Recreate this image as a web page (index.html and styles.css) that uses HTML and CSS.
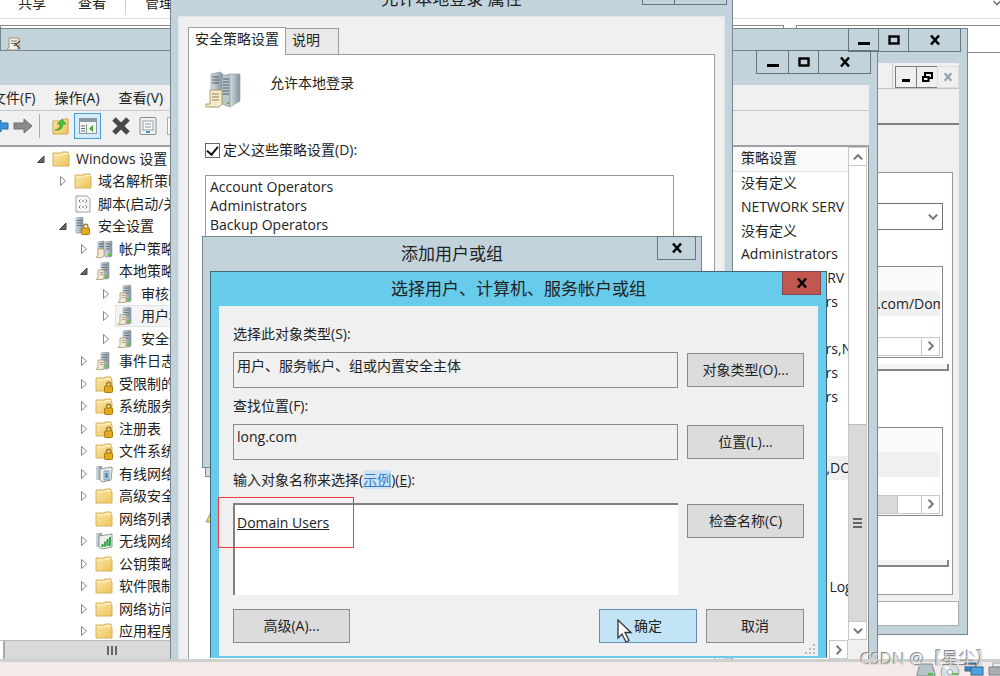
FILE: index.html
```
<!DOCTYPE html>
<html lang="zh-CN">
<head>
  <meta charset="UTF-8">
  <meta name="viewport" content="width=device-width, initial-scale=1.0">
  <title>选择用户、计算机、服务帐户或组</title>
  <link rel="stylesheet" href="styles.css">
</head>
<body>

  <!-- shared icons -->
  <svg class="sprite" aria-hidden="true">
    <defs>
      <linearGradient id="gold" x1="0" y1="0" x2="1" y2="1"><stop offset="0" stop-color="#fbe7a4"/><stop offset="1" stop-color="#eec45d"/></linearGradient>
      <linearGradient id="steel" x1="0" y1="0" x2="1" y2="0"><stop offset="0" stop-color="#d3dde3"/><stop offset="1" stop-color="#84929c"/></linearGradient>
    </defs>
    <symbol id="i-folder" viewBox="0 0 18 18">
      <path d="M1 3h8l1-1h6v2l1 1v11H1z" fill="url(#gold)" stroke="#d6b05c"/>
      <path d="M11 3.500h4" stroke="#fff"/>
      <path d="M2 5h8l1-1h5" stroke="#fff3c9" fill="none"/>
    </symbol>
    <symbol id="i-lock" viewBox="0 0 18 18">
      <path d="M11.500 12V9.500a2.200 2.200 0 0 1 4.400 0V12" fill="none" stroke="#a08038" stroke-width="1.400"/>
      <rect x="9.500" y="11" width="8" height="6.500" rx="1" fill="#e5a91c" stroke="#a97a10"/>
    </symbol>
    <symbol id="i-tower" viewBox="0 0 18 18">
      <path d="M6 1l7-1 1 1v15l-2 1H6z" fill="url(#steel)" stroke="#8695a0" stroke-width=".6"/>
      <path d="M7 3h5M7 5.500h5M7 8h5" stroke="#5f7382"/>
      <rect x="10" y="13" width="3" height="3" fill="#69c33a"/>
    </symbol>
    <symbol id="i-server" viewBox="0 0 18 18">
      <use href="#i-tower"/>
      <path d="M3 8h6v8l-1 1.500H1L3 15z" fill="#f3ead0" stroke="#a89a78" stroke-width=".8"/>
      <path d="M5 10.500h3M5 12.500h3" stroke="#9a8e70" stroke-width=".8"/>
    </symbol>
    <symbol id="i-servers" viewBox="0 0 18 18">
      <path d="M3 2l6-1v15H3z" fill="url(#steel)" stroke="#8695a0" stroke-width=".6"/>
      <path d="M10 2l7-1v15l-2 1h-5z" fill="url(#steel)" stroke="#8695a0" stroke-width=".6"/>
      <path d="M4 4h4M4 6.500h4M11 4h4M11 6.500h4M11 9h4" stroke="#5f7382"/>
      <path d="M3 9h6v7l-2 1.500H1L3 15z" fill="#f3ead0" stroke="#a89a78" stroke-width=".8"/>
      <rect x="13" y="14" width="3" height="2" fill="#69c33a"/>
    </symbol>
    <symbol id="i-secure" viewBox="0 0 18 18">
      <path d="M2 1l7-1v16H2z" fill="url(#steel)" stroke="#8695a0" stroke-width=".6"/>
      <path d="M3 3.500h5M3 6h5M3 8.500h5" stroke="#5f7382"/>
      <use href="#i-lock" x="-2"/>
    </symbol>
    <symbol id="i-script" viewBox="0 0 18 18">
      <path d="M2 1h11l3 3v13H2z" fill="#f8f8f8" stroke="#a0a0a0"/>
      <path d="M6.500 4.500L5 6l1.500 1.500M11.500 4.500L13 6l-1.500 1.500M6.500 10.500L5 12l1.500 1.500M11.500 10.500L13 12l-1.500 1.500M8 6h2M8 12h2" fill="none" stroke="#777"/>
    </symbol>
    <symbol id="i-wired" viewBox="0 0 18 18">
      <path d="M1 1h6v14H1z" fill="url(#steel)"/>
      <path d="M5 4l12-2v3l-1 10-9 2-2-2z" fill="#eef1ea" stroke="#8f9a90"/>
      <rect x="9" y="6" width="5" height="9" fill="#b9d7ea" stroke="#5d90b5" stroke-width=".8"/>
      <path d="M11.500 8v5" stroke="#3e7299" stroke-width="2"/>
    </symbol>
    <symbol id="i-wireless" viewBox="0 0 18 18">
      <path d="M1 1h6v14H1z" fill="url(#steel)"/>
      <path d="M4 4l13-2v13l-10 2-3-2z" fill="#eef1ea" stroke="#8f9a90"/>
      <path d="M5 15L16 4v10z" fill="#a9dcb4"/>
      <path d="M7.500 15v-3M10 14.500V9.500M12.500 14V7M15 14V5" stroke="#2d9a4a" stroke-width="1.800"/>
    </symbol>
    <symbol id="i-min" viewBox="0 0 12 12"><path d="M0 9.500h12" stroke="#000" stroke-width="3"/></symbol>
    <symbol id="i-max" viewBox="0 0 12 12"><rect x="1.500" y="2.500" width="9" height="7" fill="none" stroke="#000" stroke-width="2.400"/></symbol>
    <symbol id="i-restore" viewBox="0 0 12 12"><path d="M4 5V2h7v5H8" fill="none" stroke="#000" stroke-width="2"/><rect x="2" y="6" width="5.500" height="4" fill="none" stroke="#000" stroke-width="2"/></symbol>
    <symbol id="i-close" viewBox="0 0 12 12"><path d="M2 1.500l8 9M10 1.500l-8 9" stroke="currentColor" stroke-width="2.600"/></symbol>
    <symbol id="i-up" viewBox="0 0 10 10"><path d="M1.500 7L5 3.500 8.500 7" fill="none" stroke="#777" stroke-width="1.600"/></symbol>
    <symbol id="i-down" viewBox="0 0 10 10"><path d="M1.500 3L5 6.500 8.500 3" fill="none" stroke="#777" stroke-width="1.600"/></symbol>
    <symbol id="i-right" viewBox="0 0 10 10"><path d="M3 1.500L6.500 5 3 8.500" fill="none" stroke="#777" stroke-width="1.600"/></symbol>
    <symbol id="i-shut" viewBox="0 0 10 12"><path d="M2.500 1.500v9l5-4.500z" fill="#fff" stroke="#888"/></symbol>
    <symbol id="i-open" viewBox="0 0 10 12"><path d="M8 3v6.500H1.500z" fill="#666" stroke="#444"/></symbol>
  </svg>

  <main class="desktop">

    <!-- file explorer -->
    <section class="window explorer">
      <nav class="ribbon">
        <button>共享</button>
        <button>查看</button>
        <i class="ribbon-sep"></i>
        <button>管理</button>
        <svg class="ribbon-toggle" width="10" height="10"><use href="#i-down"/></svg>
      </nav>
      <div class="address-row">
        <div class="address"></div>
        <div class="search"></div>
      </div>
    </section>

    <!-- group policy management console -->
    <section class="window frame console">
      <header class="titlebar">
        <svg class="title-icon" width="16" height="14" viewBox="0 0 16 14"><path d="M3 1h10v9l-2 3H1l2-3z" fill="#f7f1df" stroke="#9c937c"/><path d="M5 4h6M5 6.500h6" stroke="#777"/><path d="M8 9l6-5M9 6l5 6" stroke="#555" stroke-width="1.500"/></svg>
        <div class="controls">
          <button class="w31" aria-label="最小化"><svg width="12" height="12"><use href="#i-min"/></svg></button>
          <button class="w31" aria-label="最大化"><svg width="12" height="12"><use href="#i-max"/></svg></button>
          <button class="w52" aria-label="关闭"><svg width="12" height="12"><use href="#i-close"/></svg></button>
        </div>
      </header>
      <div class="mdi-bar">
        <div class="mdi-menu"></div>
        <button aria-label="最小化"><svg width="8" height="12" viewBox="0 0 8 12"><path d="M0 9.500h8" stroke="#000" stroke-width="3"/></svg></button>
        <button aria-label="还原"><svg width="12" height="12"><use href="#i-restore"/></svg></button>
        <button class="mdi-off" aria-label="关闭"><svg width="10" height="10" viewBox="0 0 12 12"><use href="#i-close"/></svg></button>
      </div>
      <div class="console-tools"></div>
      <div class="scope">
        <div class="combo">
          <select aria-label="显示链接"><option>long.com</option></select>
          <svg width="12" height="12" viewBox="0 0 10 10"><use href="#i-down"/></svg>
        </div>
        <div class="links">
          <div class="links-head"></div>
          <div class="links-row"><span>long.com/Domain Controllers</span></div>
          <div class="hbar">
            <i class="hthumb none"></i>
            <button aria-label="向右"><svg width="12" height="12"><use href="#i-right"/></svg></button>
          </div>
        </div>
        <div class="groove"></div>
        <div class="links filters">
          <div class="links-head"></div>
          <div class="links-row"></div>
          <div class="hbar">
            <i class="hthumb"></i>
            <button aria-label="向右"><svg width="12" height="12"><use href="#i-right"/></svg></button>
          </div>
        </div>
        <div class="groove"></div>
      </div>
      <div class="console-status"></div>
    </section>

    <!-- policy editor -->
    <section class="window frame editor">
      <header class="titlebar">
        <div class="controls">
          <button class="w32" aria-label="最小化"><svg width="12" height="12"><use href="#i-min"/></svg></button>
          <button class="w31" aria-label="最大化"><svg width="12" height="12"><use href="#i-max"/></svg></button>
          <button class="w52" aria-label="关闭"><svg width="12" height="12"><use href="#i-close"/></svg></button>
        </div>
      </header>
      <nav class="menubar">
        <button>文件(F)</button>
        <button>操作(A)</button>
        <button>查看(V)</button>
      </nav>
      <div class="toolbar">
        <button aria-label="后退"><svg width="20" height="20" viewBox="0 0 20 20"><path d="M1 10l8-6v3h7v6H9v3z" fill="#3b8fdc" stroke="#2b6ca8"/></svg></button>
        <button aria-label="前进"><svg width="20" height="20" viewBox="0 0 20 20"><path d="M19 10l-8-7v4H1v6h10v4z" fill="#8b8b8b" stroke="#6f6f6f"/></svg></button>
        <i class="tool-sep"></i>
        <button aria-label="向上"><svg width="20" height="20" viewBox="0 0 20 20"><path d="M2 5h9l1-2h5v15H2z" fill="url(#gold)" stroke="#cfa64d"/><path d="M4 14c4-1 5-3 5-6H6l5-5 4 5h-3c0 4-3 7-8 6z" fill="#4fbf35" stroke="#2f8f20" stroke-width=".6"/></svg></button>
        <button class="tool-on" aria-label="显示控制台树"><svg width="20" height="20" viewBox="0 0 20 20"><rect x="1.500" y="2.500" width="17" height="15" fill="#f4f6f8" stroke="#8b98a5"/><path d="M2 4.500h16" stroke="#8b98a5" stroke-width="3"/><path d="M8.500 8v9" stroke="#8b98a5"/><path d="M3 10h4M3 12.500h4M3 15h4" stroke="#666"/><path d="M15 9v7l-4-3.500z" fill="#44b02c"/></svg></button>
        <button aria-label="删除"><svg width="20" height="20" viewBox="0 0 20 20"><path d="M3 3l14 14M17 3L3 17" stroke="#484848" stroke-width="5"/></svg></button>
        <button aria-label="属性"><svg width="20" height="20" viewBox="0 0 20 20"><rect x="2" y="1.500" width="16" height="17" rx="1" fill="#f2f2f2" stroke="#8a8a8a"/><rect x="5" y="5" width="10" height="9" fill="#fff" stroke="#8c9aa8"/><path d="M7 8h6M7 11h6" stroke="#7c93aa"/><path d="M8 16h4" stroke="#3c9ad6" stroke-width="2"/></svg></button>
        <button aria-label="导出列表"><svg width="20" height="20" viewBox="0 0 20 20"><rect x="2.500" y="1.500" width="15" height="17" fill="#fdfaf0" stroke="#aaa"/><path d="M5 6h2M5 10h2M5 14h2M9 6h6M9 10h6M9 14h6" stroke="#777" stroke-width="1.500"/></svg></button>
      </div>
      <div class="panes">
        <div class="tree-pane">
          <ul class="tree">
            <li class="l1"><svg class="tw"><use href="#i-open"/></svg><svg><use href="#i-folder"/></svg>Windows 设置</li>
            <li class="l2"><svg class="tw"><use href="#i-shut"/></svg><svg><use href="#i-folder"/></svg>域名解析策略</li>
            <li class="l2"><svg class="tw"></svg><svg><use href="#i-script"/></svg>脚本(启动/关机)</li>
            <li class="l2"><svg class="tw"><use href="#i-open"/></svg><svg><use href="#i-secure"/></svg>安全设置</li>
            <li class="l3"><svg class="tw"><use href="#i-shut"/></svg><svg><use href="#i-servers"/></svg>帐户策略</li>
            <li class="l3"><svg class="tw"><use href="#i-open"/></svg><svg><use href="#i-server"/></svg>本地策略</li>
            <li class="l4"><svg class="tw"><use href="#i-shut"/></svg><svg><use href="#i-server"/></svg>审核策略</li>
            <li class="l4"><svg class="tw"><use href="#i-shut"/></svg><span class="picked"><svg><use href="#i-server"/></svg>用户权限分配</span></li>
            <li class="l4"><svg class="tw"><use href="#i-shut"/></svg><svg><use href="#i-server"/></svg>安全选项</li>
            <li class="l3"><svg class="tw"><use href="#i-shut"/></svg><svg><use href="#i-server"/></svg>事件日志</li>
            <li class="l3"><svg class="tw"><use href="#i-shut"/></svg><svg><use href="#i-folder"/><use href="#i-lock"/></svg>受限制的组</li>
            <li class="l3"><svg class="tw"><use href="#i-shut"/></svg><svg><use href="#i-folder"/><use href="#i-lock"/></svg>系统服务</li>
            <li class="l3"><svg class="tw"><use href="#i-shut"/></svg><svg><use href="#i-folder"/><use href="#i-lock"/></svg>注册表</li>
            <li class="l3"><svg class="tw"><use href="#i-shut"/></svg><svg><use href="#i-folder"/><use href="#i-lock"/></svg>文件系统</li>
            <li class="l3"><svg class="tw"><use href="#i-shut"/></svg><svg><use href="#i-wired"/></svg>有线网络</li>
            <li class="l3"><svg class="tw"><use href="#i-shut"/></svg><svg><use href="#i-folder"/></svg>高级安全</li>
            <li class="l3"><svg class="tw"></svg><svg><use href="#i-folder"/></svg>网络列表</li>
            <li class="l3"><svg class="tw"><use href="#i-shut"/></svg><svg><use href="#i-wireless"/></svg>无线网络</li>
            <li class="l3"><svg class="tw"><use href="#i-shut"/></svg><svg><use href="#i-folder"/></svg>公钥策略</li>
            <li class="l3"><svg class="tw"><use href="#i-shut"/></svg><svg><use href="#i-folder"/></svg>软件限制</li>
            <li class="l3"><svg class="tw"><use href="#i-shut"/></svg><svg><use href="#i-folder"/></svg>网络访问</li>
            <li class="l3"><svg class="tw"><use href="#i-shut"/></svg><svg><use href="#i-folder"/></svg>应用程序</li>
          </ul>
          <div class="tree-scroll"><div class="tree-thumb"><i class="grip upright"></i></div></div>
        </div>
        <div class="list-pane">
          <div class="list-clip">
            <table class="policies">
              <thead><tr><th>策略设置</th></tr></thead>
              <tbody>
                <tr><td>没有定义</td></tr>
                <tr><td>NETWORK SERV</td></tr>
                <tr><td>没有定义</td></tr>
                <tr><td>Administrators</td></tr>
                <tr><td>NETWORK SERV</td></tr>
                <tr><td>Administrators</td></tr>
                <tr><td></td></tr>
                <tr><td>Administrators,NT SERVICE</td></tr>
                <tr><td>Administrators</td></tr>
                <tr><td>Administrators</td></tr>
                <tr><td></td></tr>
                <tr><td></td></tr>
                <tr class="current"><td>LONG\admin,DOMAIN</td></tr>
                <tr><td></td></tr>
                <tr><td></td></tr>
                <tr><td></td></tr>
                <tr><td></td></tr>
                <tr><td>Performance Log Users</td></tr>
              </tbody>
            </table>
          </div>
          <div class="vbar">
            <button aria-label="向上"><svg width="12" height="12"><use href="#i-up"/></svg></button>
            <div class="vtrack"></div>
            <div class="vthumb"><i class="grip"></i></div>
            <button aria-label="向下"><svg width="12" height="12"><use href="#i-down"/></svg></button>
          </div>
          <div class="list-foot"><button aria-label="向右"><svg width="12" height="12"><use href="#i-right"/></svg></button></div>
        </div>
      </div>
    </section>

    <!-- policy properties -->
    <section class="window frame props">
      <header class="titlebar">
        <h2>允许本地登录 属性</h2>
        <div class="controls">
          <button class="w32" aria-label="帮助"></button>
          <button class="w52" aria-label="关闭"></button>
        </div>
      </header>
      <div class="props-body">
        <div class="tabs" role="tablist">
          <button class="tab active" role="tab">安全策略设置</button>
          <button class="tab" role="tab">说明</button>
        </div>
        <div class="tab-page">
          <div class="policy-name">
            <svg width="38" height="38" viewBox="0 0 38 38">
              <path d="M6 3l9-2 3 2v27l-9 2-3-2z" fill="url(#steel)" stroke="#9aa6ae" stroke-width=".7"/>
              <path d="M17 5l8-2v33l-8-3z" fill="#b9c6ce" stroke="#87949d" stroke-width=".7"/>
              <path d="M25 3h10v27l-10 6z" fill="url(#steel)" stroke="#9aa6ae" stroke-width=".7"/>
              <path d="M7 6h7M7 9h7M7 12h7M18 8h6M18 11h6M18 14h6M18 17h6M18 20h6M18 23h6" stroke="#4c5d69"/>
              <rect x="22" y="31" width="3" height="2" fill="#69c33a"/>
              <path d="M5 19h12v14l-3 3H1v-3h4z" fill="#f6ebc9" stroke="#b09b6a"/>
              <path d="M7 23h7M7 26h7M7 29h7" stroke="#8e8058"/>
            </svg>
            <span>允许本地登录</span>
          </div>
          <label class="define"><input type="checkbox" checked>定义这些策略设置(D):</label>
          <ul class="members">
            <li>Account Operators</li>
            <li>Administrators</li>
            <li>Backup Operators</li>
          </ul>
          <button class="btn" aria-label="添加用户或组"></button>
          <svg class="warn" width="18" height="18" viewBox="0 0 18 18"><path d="M9 1l8 16H1z" fill="#f5d63b" stroke="#9c9c80"/><path d="M9 6v6M9 13.500v1.500" stroke="#333" stroke-width="1.500"/></svg>
        </div>
      </div>
    </section>

    <!-- add user or group -->
    <section class="window frame adduser">
      <header class="titlebar">
        <h2>添加用户或组</h2>
        <div class="controls"><button class="w38" aria-label="关闭"><svg width="12" height="12"><use href="#i-close"/></svg></button></div>
      </header>
    </section>

    <!-- object picker -->
    <section class="window frame picker">
      <header class="titlebar">
        <h2>选择用户、计算机、服务帐户或组</h2>
        <div class="controls"><button class="w38 danger" aria-label="关闭"><svg width="12" height="12"><use href="#i-close"/></svg></button></div>
      </header>
      <form class="picker-body">
        <div class="fields">
          <label for="objType">选择此对象类型(S):</label>
          <input id="objType" type="text" value="用户、服务帐户、组或内置安全主体" readonly>
          <button type="button" class="btn">对象类型(O)...</button>
          <label for="location">查找位置(F):</label>
          <input id="location" type="text" value="long.com" readonly>
          <button type="button" class="btn">位置(L)...</button>
          <div class="names-label"><label for="names">输入对象名称来选择</label>(<a href="#">示例</a>)(<u>E</u>):</div>
          <textarea id="names" spellcheck="false">Domain Users</textarea>
          <button type="button" class="btn">检查名称(C)</button>
        </div>
        <div class="actions">
          <button type="button" class="btn advanced">高级(A)...</button>
          <button type="button" class="btn ok">确定</button>
          <button type="button" class="btn cancel">取消</button>
        </div>
        <svg class="sizer" width="10" height="10" viewBox="0 0 10 10"><path d="M8 0h2v2H8zM4 4h2v2H4zM8 4h2v2H8zM0 8h2v2H0zM4 8h2v2H4zM8 8h2v2H8z" fill="#bbb"/></svg>
      </form>
    </section>

    <div class="marker"></div>
    <svg class="pointer" width="16" height="24" viewBox="0 0 16 24"><path d="M1 1v18l4-4 4 8 3-1.500-4-8h6z" fill="#fff" stroke="#333" stroke-width="1.300"/></svg>
  </main>

  <footer class="taskbar">
    <svg width="20" height="14" viewBox="0 0 20 14"><path d="M4 2h12l3 10v2H1v-2z" fill="#b9c3ca" stroke="#7f8c94"/><path d="M12 12h5" stroke="#4fbf35" stroke-width="2"/></svg>
    <svg width="20" height="14" viewBox="0 0 20 14"><circle cx="10" cy="10" r="9" fill="#d5dde2" stroke="#9aa6ad"/><path d="M10 10L3 5a9 9 0 0 1 5-4z" fill="#f7fafb"/><circle cx="10" cy="10" r="2.500" fill="#fff" stroke="#9aa6ad"/><path d="M12 12h6" stroke="#6fbf55" stroke-width="2"/></svg>
    <svg width="20" height="14" viewBox="0 0 20 14"><rect x="1" y="1" width="11" height="8" fill="#3384c4" stroke="#47626f"/><rect x="7" y="5" width="12" height="8" fill="#4aa3e4" stroke="#47626f"/></svg>
    <svg width="20" height="14" viewBox="0 0 20 14"><path d="M5 1h12v4H5z" fill="#eee" stroke="#999"/><path d="M1 5h19v8H1z" fill="#a9adb0" stroke="#808588"/></svg>
    <span class="watermark">CSDN @【星尘】</span>
  </footer>

</body>
</html>
```

FILE: styles.css
```
* {
  box-sizing: border-box;
}

body {
  margin: 0;
  height: 100vh;
  display: grid;
  grid-template-rows: 1fr 17px;
  overflow: hidden;
  font-family: "Open Sans", "Noto Sans", "Noto Sans CJK SC", sans-serif;
  font-size: 14px;
  line-height: 20px;
  color: #222;
  background: #f3eae9;
}

button, input, select, textarea {
  font: inherit;
  color: inherit;
  margin: 0;
  padding: 0;
  border-radius: 0;
}

button {
  border: none;
  background: none;
  white-space: nowrap;
}

ul {
  list-style: none;
  margin: 0;
  padding: 0;
}

h2 {
  margin: 0;
  font-size: 17px;
  font-weight: normal;
}

.sprite {
  position: absolute;
  width: 0;
  height: 0;
}

.desktop {
  position: relative;
  overflow: hidden;
  background: #fff;
}

/* windows */
.window {
  position: absolute;
  display: flex;
  flex-direction: column;
}

.frame {
  background: #c2d3dc;
  border: 1px solid #77858e;
  padding: 0 8px 8px;
}

.titlebar {
  position: relative;
  flex: none;
  height: 34px;
  display: flex;
  align-items: center;
  justify-content: center;
}

.controls {
  position: absolute;
  top: -1px;
  right: -2px;
  display: flex;
}

.controls button {
  height: 24px;
  display: flex;
  align-items: center;
  justify-content: center;
  border: 1px solid #65747e;
  margin-left: -1px;
  color: #000;
}

.w31 { width: 31px; }
.w32 { width: 33px; }
.w38 { width: 39px; }
.w52 { width: 53px; }

/* explorer */
.explorer {
  top: -12px;
  left: 0;
  right: 0;
  bottom: 0;
  background: #fff;
}

.ribbon {
  display: flex;
  align-items: center;
  gap: 32px;
  height: 31px;
  padding-left: 18px;
  border-bottom: 1px solid #ddd;
}

.ribbon-sep {
  width: 1px;
  height: 24px;
  margin: 0 -13px;
  background: #ccc;
}

.ribbon-toggle {
  margin-left: auto;
  margin-right: -2px;
}

.address-row {
  display: flex;
  gap: 12px;
  margin-top: 6px;
}

.address, .search {
  height: 28px;
  border: 1px solid #888;
}

.address {
  flex: 790;
}

.search {
  flex: 205;
  margin-right: -1px;
}

/* management console */
.console {
  top: 28px;
  left: 0;
  width: 968px;
  height: 607px;
}

.title-icon {
  position: absolute;
  left: -3px;
  top: 8px;
}

.console .titlebar {
  z-index: 1;
}

.mdi-bar {
  display: flex;
  height: 26px;
  padding-right: 1px;
  background: #f0f0f0;
  border-bottom: 1px solid #c4c4c8;
}

.mdi-menu {
  flex: 1;
  margin-right: 2px;
  border-right: 1px solid #ccc;
}

.mdi-bar button {
  width: 22px;
  height: 22px;
  margin-top: 3px;
  margin-right: -1px;
  border: 1px solid #7d7d7d;
  display: flex;
  align-items: center;
  justify-content: center;
}

.mdi-bar .mdi-off {
  border-color: #ddd;
  color: #95a3b0;
}

.console-tools {
  position: relative;
  height: 36px;
  background: #f0f0f0;
  border-bottom: 2px solid #808080;
}

.console .scope {
  background: #fff;
  border: 1px solid #9298a2;
  height: 424px;
  padding: 30px 9px 0;
  box-shadow: 0 0 0 6px #f0f0f0, 0 -42px 0 6px #f0f0f0;
  margin: 47px 6px 0;
}

.combo {
  position: relative;
  height: 27px;
}

.combo select {
  width: 100%;
  height: 100%;
  appearance: none;
  background: #fff;
  border: 1px solid #707070;
}

.combo svg {
  position: absolute;
  right: 4px;
  top: 8px;
}

.links {
  display: flex;
  flex-direction: column;
  height: 92px;
  margin-top: 36px;
  padding: 0 2px 1px;
  border: 1px solid #828790;
}

.links-head {
  height: 24px;
  background: #fafafa;
}

.links-row {
  height: 25px;
  background: #f0f0f0;
  display: flex;
  justify-content: flex-end;
}

.links-row span {
  width: 91px;
  line-height: 25px;
  white-space: nowrap;
  overflow: hidden;
}

.hbar {
  display: flex;
  height: 19px;
  margin-top: auto;
  border: 1px solid #c8c8c8;
}

.hthumb {
  flex: 1;
  margin-right: 23px;
  background: #d9d9d9;
  border-right: 1px solid #bbb;
}

.hthumb.none {
  margin-right: 0;
  background: none;
  border: none;
}

.hbar button {
  width: 18px;
  border-left: 1px solid #c8c8c8;
  display: flex;
  align-items: center;
  justify-content: center;
}

.groove {
  height: 7px;
  margin: 6px -6px 0 0;
  background: #f4f4f4;
  border: solid #868686;
  border-width: 0 2px 2px 0;
}

.filters {
  height: 89px;
  margin-top: 56px;
}

.filters + .groove {
  margin-top: 44px;
}

.console-status {
  height: 25px;
  margin-top: 6px;
  background: #fff;
  border: 1px solid #a8adb2;
}

/* policy editor */
.editor {
  top: 50px;
  left: -18px;
  width: 896px;
  bottom: 0;
  padding-bottom: 0;
  border-bottom: none;
}

.menubar {
  display: flex;
  flex: none;
  gap: 19px;
  height: 26px;
  padding-left: 1px;
  align-items: center;
  background: #f0f0f0;
  border-bottom: 1px solid #c6c6ce;
}

.toolbar {
  display: flex;
  flex: none;
  align-items: center;
  height: 34px;
  padding-bottom: 4px;
  background: #f0f0f0;
}

.toolbar button {
  width: 27px;
  height: 26px;
  display: flex;
  align-items: center;
  justify-content: center;
}

.toolbar button:nth-child(-n+2) {
  width: 21px;
}

.tool-sep {
  width: 1px;
  height: 24px;
  margin: 0 7px 0 6px;
  background: #aaa;
}

.toolbar .tool-on {
  background: #d6ebfa;
  border: 1px solid #4a9bd4;
}

.toolbar .tool-on + button {
  margin-left: 6px;
}

.panes {
  flex: 1;
  min-height: 0;
  display: grid;
  grid-template-columns: 262px 138px;
  justify-content: space-between;
  background: #fff;
  border-top: 2px solid #a0a0a8;
}

.tree-pane {
  display: flex;
  flex-direction: column;
  min-height: 0;
}

.tree {
  flex: 1;
  min-height: 0;
  overflow: hidden;
}

.tree li {
  display: flex;
  align-items: center;
  height: 23px;
  white-space: nowrap;
}

.tree li:nth-child(even) {
  height: 22px;
}

.tree svg {
  flex: none;
  width: 18px;
  height: 18px;
  margin-right: 6px;
}

.tree .tw {
  width: 10px;
  height: 12px;
}

.l1 { padding-left: 45px; }
.l2 { padding-left: 67px; }
.l3 { padding-left: 88px; }
.l4 { padding-left: 110px; }

.picked {
  display: flex;
  align-items: center;
  margin-left: -2px;
  padding-left: 1px;
  background: #f4f4f4;
  border: 1px solid #e2e2e2;
}

.tree-scroll {
  flex: none;
  height: 19px;
  padding-left: 12px;
  border-top: 1px solid #bbb;
}

.tree-thumb {
  width: 216px;
  height: 100%;
  background: #d9d9d9;
  border-left: 2px solid #aaa;
  display: flex;
  align-items: center;
  justify-content: center;
}

.grip {
  width: 9px;
  height: 10px;
  background: repeating-linear-gradient(#666 0 2px, #d9d9d9 2px 4px);
}

.grip.upright {
  width: 10px;
  height: 9px;
  background: repeating-linear-gradient(90deg, #666 0 2px, #d9d9d9 2px 4px);
}

.list-pane {
  display: grid;
  grid-template-columns: 1fr 19px;
  grid-template-rows: 1fr 19px;
  padding-right: 1px;
  border-right: 1px solid #888;
  min-height: 0;
}

.list-clip {
  overflow: hidden;
  min-height: 0;
}

.policies {
  width: 100%;
  border-collapse: collapse;
  table-layout: fixed;
}

.policies th, .policies td {
  height: 24px;
  padding: 0 0 1px 10px;
  font-weight: normal;
  text-align: left;
  white-space: nowrap;
}

.policies th {
  background: #fafafa;
  border-bottom: 1px solid #e2e2e2;
}

.policies tr:nth-child(4n) td {
  height: 23px;
}

.current {
  background: #f0f0f0;
}

.vbar {
  display: flex;
  flex-direction: column;
  border: solid #c8c8c8;
  border-width: 0 1px;
  min-height: 0;
}

.vbar button, .list-foot button {
  flex: none;
  height: 19px;
  display: flex;
  align-items: center;
  justify-content: center;
  border: 1px solid #c8c8c8;
  border-width: 1px 0;
}

.vtrack {
  flex: 258;
}

.vthumb {
  flex: 196;
  background: #d9d9d9;
  border-top: 1px solid #bbb;
  display: flex;
  align-items: center;
  justify-content: center;
}

.list-foot {
  display: flex;
  justify-content: flex-end;
  grid-column: 1 / -1;
  padding-right: 19px;
  background: linear-gradient(90deg, #fff 80%, #f0f0f0 80%);
}

.list-foot button {
  width: 19px;
  border-width: 1px;
  background: #fff;
}

/* policy properties */
.props {
  top: -19px;
  left: 170px;
  width: 563px;
  bottom: 0;
  padding: 0 7px;
  border-bottom: none;
}

.props .controls button {
  background: #c2d3dc;
}

.props-body {
  flex: 1;
  padding: 10px 9px 0;
  background: #f0f0f0;
  border: 1px solid #dfe5e9;
  border-bottom: none;
  display: flex;
  flex-direction: column;
}

.tabs {
  display: flex;
  align-items: flex-end;
}

.tab {
  height: 26px;
  padding: 0 6px 3px;
  background: #e9e9e9;
  border: 1px solid #9c9ca4;
  border-width: 1px 1px 0 0;
}

.tab:last-child {
  width: 53px;
  text-align: left;
}

.tab.active {
  height: 28px;
  padding-bottom: 5px;
  margin-bottom: -1px;
  z-index: 1;
  background: #fff;
  border-left-width: 1px;
}

.tab-page {
  flex: 1;
  padding: 16px 40px 0 16px;
  background: #fff;
  border: 1px solid #9c9ca4;
  border-bottom: none;
  display: flex;
  flex-direction: column;
  align-items: flex-start;
}

.policy-name {
  display: flex;
  gap: 27px;
  line-height: 24px;
}

.define {
  display: flex;
  align-items: center;
  gap: 3px;
  margin: 31px 0 15px;
}

.define input {
  appearance: none;
  width: 15px;
  height: 15px;
  border: 1px solid #666;
  background: #fff;
  display: grid;
  place-items: center;
}

.define input:checked::before {
  content: "";
  width: 5px;
  height: 9px;
  margin-top: -2px;
  border: solid #111;
  border-width: 0 2px 2px 0;
  transform: rotate(40deg);
}

.members {
  align-self: stretch;
  height: 264px;
  padding: 1px 4px;
  border: 1px solid #9298a2;
}

.members li {
  height: 19px;
}

.btn {
  background: #dcdcdc;
  border: 1px solid #8a8a8a;
}

.tab-page .btn {
  width: 140px;
  height: 30px;
  margin-top: 8px;
}

.warn {
  margin-top: 28px;
}

/* add user or group */
.adduser {
  top: 236px;
  left: 202px;
  width: 500px;
  height: 232px;
}

.adduser .controls {
  right: -3px;
}

/* object picker */
.picker {
  top: 271px;
  left: 210px;
  width: 617px;
  height: 387px;
  padding-bottom: 1px;
  background: #68cbeb;
  border-color: #3f6878;
  border-bottom-color: #68cbeb;
}

.picker .controls {
  right: -3px;
}

.picker .danger {
  background: #c2574f;
  border-color: #7c4a50;
}

.picker-body {
  flex: 1;
  position: relative;
  padding: 10px 14px 0;
  background: #f0f0f0;
}

.fields {
  display: grid;
  grid-template-columns: 1fr 117px;
  column-gap: 9px;
}

.fields > label, .names-label {
  grid-column: 1 / -1;
  height: 36px;
  padding-top: 8px;
}

.names-label {
  height: 43px;
  padding-top: 10px;
}

.names-label a {
  color: #2f7fd0;
  background: #cfe3f5;
}

.fields input {
  height: 36px;
  padding: 0 3px 11px;
  background: #f0f0f0;
  border: 1px solid #8c8c8c;
}

.fields textarea {
  height: 92px;
  padding: 8px 2px;
  resize: none;
  background: #fff;
  border: solid #808080;
  border-width: 2px 0 0 2px;
  text-decoration: underline;
  outline: none;
}

.fields .btn {
  height: 34px;
  margin-top: 1px;
}

.actions {
  display: flex;
  gap: 9px;
  margin-top: 14px;
}

.actions .btn {
  height: 34px;
  width: 98px;
}

.actions .advanced {
  width: 117px;
  margin-right: auto;
}

.actions .ok {
  background: #c2e4f6;
  border-color: #5f8fb0;
}

.sizer {
  position: absolute;
  right: 3px;
  bottom: 2px;
}

/* overlays */
.marker {
  position: absolute;
  left: 218px;
  top: 497px;
  width: 136px;
  height: 51px;
  border: 1px solid #ee3b3b;
}

.pointer {
  position: absolute;
  left: 617px;
  top: 619px;
}

.taskbar {
  position: relative;
  display: flex;
  align-items: flex-end;
  justify-content: flex-end;
  gap: 4px;
  margin-right: -8px;
  border-top: 3px solid #cfcfcf;
}

.watermark {
  position: absolute;
  right: 15px;
  top: -13px;
  font-size: 17px;
  white-space: nowrap;
  color: #d8d8d8;
  text-shadow: -1px -1px 0 #888;
}
```
